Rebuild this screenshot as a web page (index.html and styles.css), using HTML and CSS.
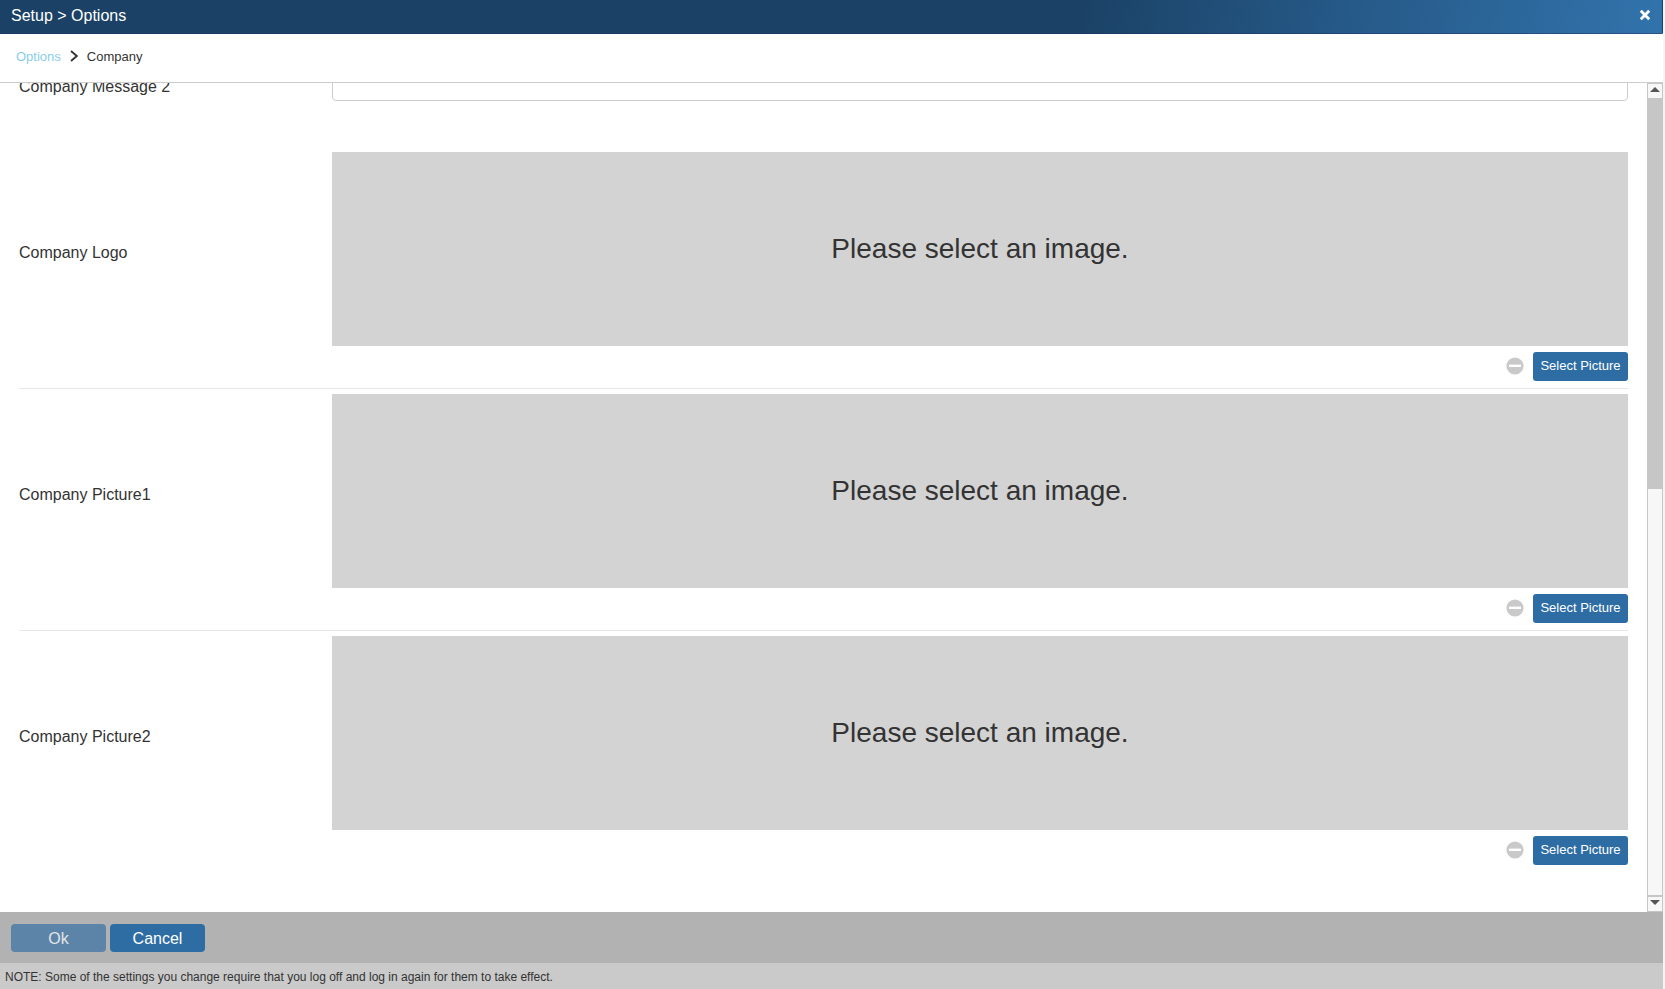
FILE: index.html
```html
<!DOCTYPE html>
<html lang="en">

<head>
  <meta charset="UTF-8">
  <meta name="viewport" content="width=device-width, initial-scale=1.0">
  <title>Setup &gt; Options</title>
  <link rel="stylesheet" href="styles.css">
</head>

<body>
  <div class="window">
    <header class="title-bar">
      <h1>Setup &gt; Options</h1>
      <button class="close" type="button" aria-label="Close">
        <svg width="12" height="12" viewBox="0 0 12 12">
          <path d="M1.8 1.8L10.2 10.2M10.2 1.8L1.8 10.2" stroke="#fff" stroke-width="2.8" />
        </svg>
      </button>
    </header>

    <nav class="breadcrumb">
      <a href="#">Options</a>
      <svg width="8" height="12" viewBox="0 0 8 12">
        <path d="M1 1L6.8 6L1 11" fill="none" stroke="#333" stroke-width="1.8" />
      </svg>
      <span>Company</span>
    </nav>

    <main class="content">
      <form class="settings" id="settings">
        <div class="row message">
          <label for="message2">Company Message 2</label>
          <input type="text" id="message2" name="message2">
        </div>

        <div class="row picture">
          <label for="logo">Company Logo</label>
          <div class="picker">
            <div class="preview">Please select an image.</div>
            <div class="actions">
              <button class="remove" type="button" aria-label="Remove Company Logo">
                <svg width="18" height="18" viewBox="0 0 18 18">
                  <circle cx="9" cy="9" r="8.6" fill="#c9c9c9" />
                  <rect x="3" y="7.6" width="12" height="2.4" fill="#fff" />
                </svg>
              </button>
              <button class="btn select" type="button" id="logo">Select Picture</button>
            </div>
          </div>
        </div>

        <div class="row picture">
          <label for="picture1">Company Picture1</label>
          <div class="picker">
            <div class="preview">Please select an image.</div>
            <div class="actions">
              <button class="remove" type="button" aria-label="Remove Company Picture1">
                <svg width="18" height="18" viewBox="0 0 18 18">
                  <circle cx="9" cy="9" r="8.6" fill="#c9c9c9" />
                  <rect x="3" y="7.6" width="12" height="2.4" fill="#fff" />
                </svg>
              </button>
              <button class="btn select" type="button" id="picture1">Select Picture</button>
            </div>
          </div>
        </div>

        <div class="row picture">
          <label for="picture2">Company Picture2</label>
          <div class="picker">
            <div class="preview">Please select an image.</div>
            <div class="actions">
              <button class="remove" type="button" aria-label="Remove Company Picture2">
                <svg width="18" height="18" viewBox="0 0 18 18">
                  <circle cx="9" cy="9" r="8.6" fill="#c9c9c9" />
                  <rect x="3" y="7.6" width="12" height="2.4" fill="#fff" />
                </svg>
              </button>
              <button class="btn select" type="button" id="picture2">Select Picture</button>
            </div>
          </div>
        </div>
      </form>

      <div class="scrollbar">
        <div class="arrow">
          <svg width="10" height="5" viewBox="0 0 10 5">
            <path d="M0 5L5 0L10 5Z" fill="#555" />
          </svg>
        </div>
        <div class="track">
          <div class="thumb"></div>
        </div>
        <div class="arrow">
          <svg width="10" height="5" viewBox="0 0 10 5">
            <path d="M0 0L5 5L10 0Z" fill="#555" />
          </svg>
        </div>
      </div>
    </main>

    <footer>
      <div class="buttons">
        <button class="btn" type="submit" form="settings" disabled>Ok</button>
        <button class="btn" type="button">Cancel</button>
      </div>
      <p class="note">NOTE: Some of the settings you change require that you log off and log in again for them to take effect.</p>
    </footer>
  </div>
</body>

</html>
```
FILE: styles.css
```css
* {
  box-sizing: border-box;
}

body {
  margin: 0;
  padding-right: 2px;
  background: #f5f5f5;
  color: #333;
  font-family: Arial, "Liberation Sans", sans-serif;
  font-size: 16px;
}

button {
  padding: 0;
  border: 0;
  background: none;
  font-family: inherit;
  cursor: pointer;
}

svg {
  display: block;
}

.window {
  display: flex;
  flex-direction: column;
  height: 100vh;
  background: #fff;
}

/* title bar */
.title-bar {
  display: flex;
  flex: none;
  align-items: center;
  justify-content: space-between;
  height: 34px;
  padding: 0 11px;
  border-right: 1px solid #1b4266;
  border-bottom: 1px solid rgba(27, 50, 102, 0.5);
  background: linear-gradient(100deg, #1b4266 0%, #1b4266 65%, #255886 80%, #3273ac 100%);
  color: #fff;
}

.title-bar h1 {
  margin: 0 0 2px;
  font-size: 16px;
  font-weight: 400;
  line-height: 20px;
}

.close {
  margin-bottom: 3px;
}

/* breadcrumb */
.breadcrumb {
  display: flex;
  flex: none;
  align-items: center;
  gap: 9px;
  height: 49px;
  padding: 0 16px 3px;
  border-bottom: 1px solid #ccc;
  font-size: 13px;
  line-height: 20px;
}

.breadcrumb svg {
  margin-bottom: 2px;
}

.breadcrumb a {
  color: #87ceeb;
  text-decoration: none;
}

/* settings */
.content {
  display: flex;
  flex: 1;
  min-height: 0;
  overflow: hidden;
}

/* list is scrolled down a little */
.settings {
  flex: 1;
  margin-top: -16px;
  padding: 0 19px;
}

.row {
  display: grid;
  grid-template-columns: 313px 1fr;
}

.row label {
  display: flex;
  align-items: center;
  height: 34px;
  padding-top: 6px;
}

.message {
  margin-bottom: 46px;
}

.message input {
  width: 100%;
  height: 34px;
  padding: 6px 12px;
  border: 1px solid #ccc;
  border-radius: 4px;
}

.picture {
  padding: 5px 0 7px;
  border-bottom: 1px solid #e7e7e7;
}

.picture:last-child {
  border-bottom: 0;
}

.picture label {
  height: 194px;
  padding-top: 8px;
}

.preview {
  display: flex;
  align-items: center;
  justify-content: center;
  height: 194px;
  background: #d3d3d3;
  font-size: 28px;
}

.actions {
  display: flex;
  align-items: center;
  justify-content: flex-end;
  gap: 9px;
  margin-top: 6px;
}

.remove {
  margin-bottom: 1px;
}

.btn {
  width: 95px;
  height: 28px;
  padding-top: 1px;
  border-radius: 4px;
  background: #2e6da4;
  color: #fff;
  font-size: 16px;
}

.btn:disabled {
  opacity: 0.65;
}

.select {
  height: 29px;
  padding: 0 0 2px;
  border-radius: 3px;
  font-size: 13px;
}

/* scrollbar */
.scrollbar {
  display: flex;
  flex-direction: column;
  width: 16px;
  border: 1px solid #c6c6c6;
  background: #f7f7f7;
}

.arrow {
  display: flex;
  align-items: center;
  justify-content: center;
  height: 14px;
  padding-bottom: 3px;
}

.track {
  flex: 1;
  border-bottom: 2px solid #c6c6c6;
}

.thumb {
  height: 49%;
  margin: 0 -1px;
  background: #c6c6c6;
}

/* footer */
footer {
  flex: none;
}

.buttons {
  display: flex;
  gap: 4px;
  padding: 12px 11px 11px;
  background: #b2b2b2;
}

.note {
  margin: 0;
  padding: 4px 5px 2px;
  background: #cacaca;
  font-size: 12px;
  line-height: 20px;
}
```
